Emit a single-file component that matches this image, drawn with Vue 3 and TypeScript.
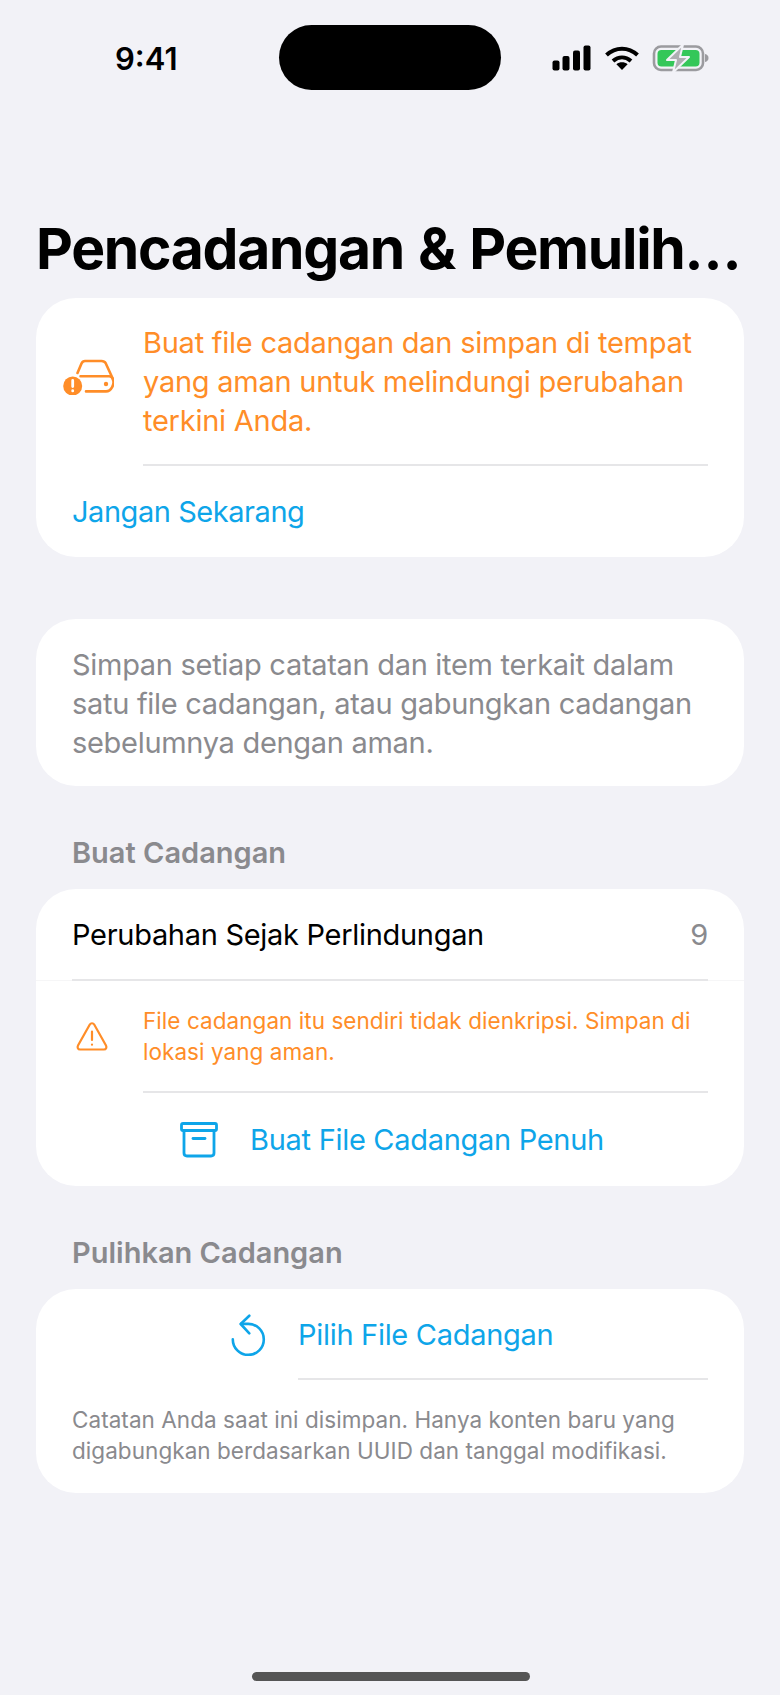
<script setup lang="ts">
// Layar pencadangan: kartu peringatan, deskripsi, buat dan pulihkan cadangan
const title = 'Pencadangan & Pemulih…'
const changes = 9
</script>

<template>
  <div class="screen">
    <header class="status">
      <span class="time">9:41</span>
      <div class="island"></div>
      <div class="status-icons">
        <svg width="40" height="26" viewBox="0 0 40 26" fill="#000">
          <rect x="0.5" y="15.5" width="7" height="10" rx="2" />
          <rect x="10.5" y="11" width="7" height="14.5" rx="2" />
          <rect x="21" y="5.5" width="7" height="20" rx="2" />
          <rect x="31.5" y="0.5" width="7" height="25" rx="2" />
        </svg>
        <svg width="34" height="24" viewBox="0 0 34 24" fill="none" stroke="#000" stroke-width="4">
          <path d="M1.500 9C10.500 0.500 23.500 0.500 32.500 9" />
          <path d="M8 15C13.500 10.200 20.500 10.200 26 15" />
          <path d="M17 24l-5.600-5.800c3.200-2.600 8-2.600 11.200 0z" fill="#000" stroke="none" />
        </svg>
        <svg width="57" height="31" viewBox="0 0 57 31">
          <rect x="2" y="3.500" width="49" height="23.500" rx="7" fill="none" stroke="#9b9b9f" stroke-width="2.600" />
          <path d="M53 11c2.400 .5 3.500 2 3.500 4s-1.100 3.500-3.500 4z" fill="#9b9b9f" />
          <rect x="5.500" y="7" width="42" height="16.500" rx="4" fill="#34c759" />
          <path d="M31 1.500L15 17H24L21 29.500L37 14H28Z" fill="#aeaeb2" stroke="#f2f2f7" stroke-width="2" stroke-linejoin="round" />
        </svg>
      </div>
    </header>

    <h1 class="title">{{ title }}</h1>

    <section class="card alert-card">
      <div class="alert-row">
        <div class="alert-icon">
          <svg width="52" height="38" viewBox="7 10 52 38" fill="none" stroke="#ff8d28" stroke-width="2.600" stroke-linecap="round" stroke-linejoin="round">
            <path d="M22.500 26L26.500 16.500C27.300 14.800 28.500 14 30 14H46.500C48.500 14 49.800 14.700 50.700 16.200L58.200 32.500C59.500 37 56.500 44.400 51 44.400H31" />
            <path d="M25.500 29.300H54C56 29.300 57.700 31 58.200 33.500" />
            <circle cx="51" cy="37" r="2.200" fill="#ff8d28" stroke="none" />
            <circle cx="17.700" cy="39" r="9.500" fill="#ff8d28" stroke="none" />
            <path d="M17.700 33.500V39.500M17.700 43.700V43.900" stroke="#fff" stroke-width="2.800" />
          </svg>
        </div>
        <p class="alert-text">Buat file cadangan dan simpan di tempat yang aman untuk melindungi perubahan terkini Anda.</p>
      </div>
      <div class="action-row">Jangan Sekarang</div>
    </section>

    <section class="card intro-card">
      Simpan setiap catatan dan item terkait dalam satu file cadangan, atau gabungkan cadangan sebelumnya dengan aman.
    </section>

    <h2 class="section-label">Buat Cadangan</h2>
    <section class="card create-card">
      <div class="count-wrap">
        <div class="count-row">
          <span>Perubahan Sejak Perlindungan</span>
          <span class="count">{{ changes }}</span>
        </div>
      </div>
      <div class="warn-row">
        <div class="warn-icon">
          <svg width="32" height="30" viewBox="0 0 32 30" fill="none" stroke="#ff8d28" stroke-width="2.200" stroke-linecap="round" stroke-linejoin="round">
            <path d="M13.800 3.500C14.800 1.800 17.200 1.800 18.200 3.500L30 24.500C31 26.500 30 28.500 28 28.500H4C2 28.500 1 26.500 2 24.500Z" />
            <path d="M16 10.500V19M16 23.500V23.700" />
          </svg>
        </div>
        <p class="warn-text">File cadangan itu sendiri tidak dienkripsi. Simpan di lokasi yang aman.</p>
      </div>
      <div class="button-row">
        <button class="link-btn backup-btn">
          <svg width="38" height="36" viewBox="0 0 38 36" fill="none" stroke="#0ea5e9" stroke-width="2.800" stroke-linecap="round" stroke-linejoin="round">
            <rect x="1.500" y="1.500" width="35" height="7" rx="1.500" />
            <path d="M4 8.500V31C4 33 5 34 7 34H31C33 34 34 33 34 31V8.500" />
            <path d="M13 16.500H25" />
          </svg>
          <span>Buat File Cadangan Penuh</span>
        </button>
      </div>
    </section>

    <h2 class="section-label">Pulihkan Cadangan</h2>
    <section class="card restore-card">
      <div class="restore-row">
        <svg class="restore-icon" width="36" height="42" viewBox="0 0 36 42" fill="none" stroke="#0ea5e9" stroke-width="2.600" stroke-linecap="round" stroke-linejoin="round">
          <path d="M1.800 25.400A15.500 15.500 0 1 0 17.300 9.900H10" />
          <path d="M18.300 1.700L9.700 10L18.300 19.300" />
        </svg>
        <div class="restore-label">Pilih File Cadangan</div>
      </div>
      <p class="restore-note">Catatan Anda saat ini disimpan. Hanya konten baru yang digabungkan berdasarkan UUID dan tanggal modifikasi.</p>
    </section>

    <div class="home-bar"></div>
  </div>
</template>

<style>
html, body {
  margin: 0;
  background: #f2f2f7;
}
</style>

<style scoped>
.screen {
  position: relative;
  width: 780px;
  height: 1695px;
  box-sizing: border-box;
  padding: 0 36px;
  background: #f2f2f7;
  font-family: Inter, "Liberation Sans", sans-serif;
  font-size: 29px;
  letter-spacing: -0.3px;
  color: #000;
  overflow: hidden;
}

.status {
  position: relative;
  display: flex;
  align-items: center;
  justify-content: space-between;
  height: 116px;
  margin: 0 -36px;
  padding: 0 71px 0 115px;
  box-sizing: border-box;
}

.time {
  font-size: 31px;
  font-weight: 600;
  letter-spacing: 0;
}

.island {
  position: absolute;
  left: 279px;
  top: 25px;
  width: 222px;
  height: 65px;
  border-radius: 33px;
  background: #000;
}

.status-icons {
  display: flex;
  align-items: center;
  gap: 13px;
}

.title {
  margin: 99px 0 0;
  height: 83px;
  font-size: 57px;
  line-height: 68px;
  font-weight: 700;
  letter-spacing: -1.3px;
  word-spacing: 2px;
  white-space: nowrap;
}

.card {
  background: #fff;
  border-radius: 40px;
  box-sizing: border-box;
}

.alert-card {
  height: 259px;
  padding: 0 36px;
}

.alert-row {
  display: flex;
  align-items: center;
  height: 168px;
  margin-left: -10px;
}

.alert-icon {
  width: 81px;
  flex: none;
  padding-bottom: 6px;
}

.alert-text {
  margin: 0;
  flex: 1;
  line-height: 39px;
  letter-spacing: -0.25px;
  color: #ff8d28;
  border-bottom: 2px solid #e6e6e8;
  padding: 25px 0 24px;
}

.action-row {
  height: 91px;
  line-height: 91px;
  letter-spacing: -0.45px;
  color: #0ea5e9;
}

.intro-card {
  height: 167px;
  margin-top: 62px;
  padding: 26px 36px 0;
  line-height: 39px;
  color: #8a8a8e;
}

.section-label {
  margin: 46px 36px 0;
  height: 57px;
  font-size: 29px;
  line-height: 42px;
  font-weight: 600;
  letter-spacing: 0;
  color: #8a8a8e;
}

.create-card {
  height: 297px;
  padding: 0 36px;
}

/* тонкая линия на всю ширину карточки под строкой счётчика */
.count-wrap {
  margin: 0 -36px;
  padding: 0 36px;
  border-bottom: 1px solid #f6f6f7;
}

.count-row {
  display: flex;
  justify-content: space-between;
  height: 92px;
  line-height: 92px;
  border-bottom: 2px solid #e6e6e8;
  box-sizing: border-box;
  margin-bottom: -1px;
}

.count {
  color: #8a8a8e;
}

.warn-row {
  display: flex;
  align-items: center;
  height: 112px;
}

.warn-icon {
  width: 71px;
  flex: none;
  display: flex;
  padding-left: 4px;
  padding-bottom: 2px;
  box-sizing: border-box;
}

.warn-text {
  margin: 0;
  flex: 1;
  height: 112px;
  box-sizing: border-box;
  padding-top: 24px;
  font-size: 22.5px;
  line-height: 31px;
  letter-spacing: 0.05px;
  color: #ff8d28;
  border-bottom: 2px solid #e6e6e8;
}

.button-row {
  display: flex;
  justify-content: center;
  align-items: center;
  height: 93px;
}

.link-btn {
  display: flex;
  align-items: center;
  gap: 32px;
  margin-left: 4px;
  padding: 0;
  border: 0;
  background: none;
  font: inherit;
  letter-spacing: inherit;
  color: #0ea5e9;
}

.restore-card {
  height: 204px;
  padding: 0 36px;
}

.restore-row {
  display: flex;
  align-items: center;
  height: 91px;
}

.restore-icon {
  flex: none;
  margin-left: 159px;
}

.restore-label {
  flex: 1;
  height: 91px;
  line-height: 91px;
  margin-left: 31px;
  color: #0ea5e9;
  border-bottom: 2px solid #e6e6e8;
  box-sizing: border-box;
}

.restore-note {
  margin: 0;
  padding-top: 24px;
  font-size: 22.5px;
  line-height: 31px;
  letter-spacing: 0.05px;
  color: #8a8a8e;
}

.home-bar {
  position: absolute;
  left: 252px;
  bottom: 14px;
  width: 278px;
  height: 9px;
  border-radius: 5px;
  background: #555;
}
</style>
